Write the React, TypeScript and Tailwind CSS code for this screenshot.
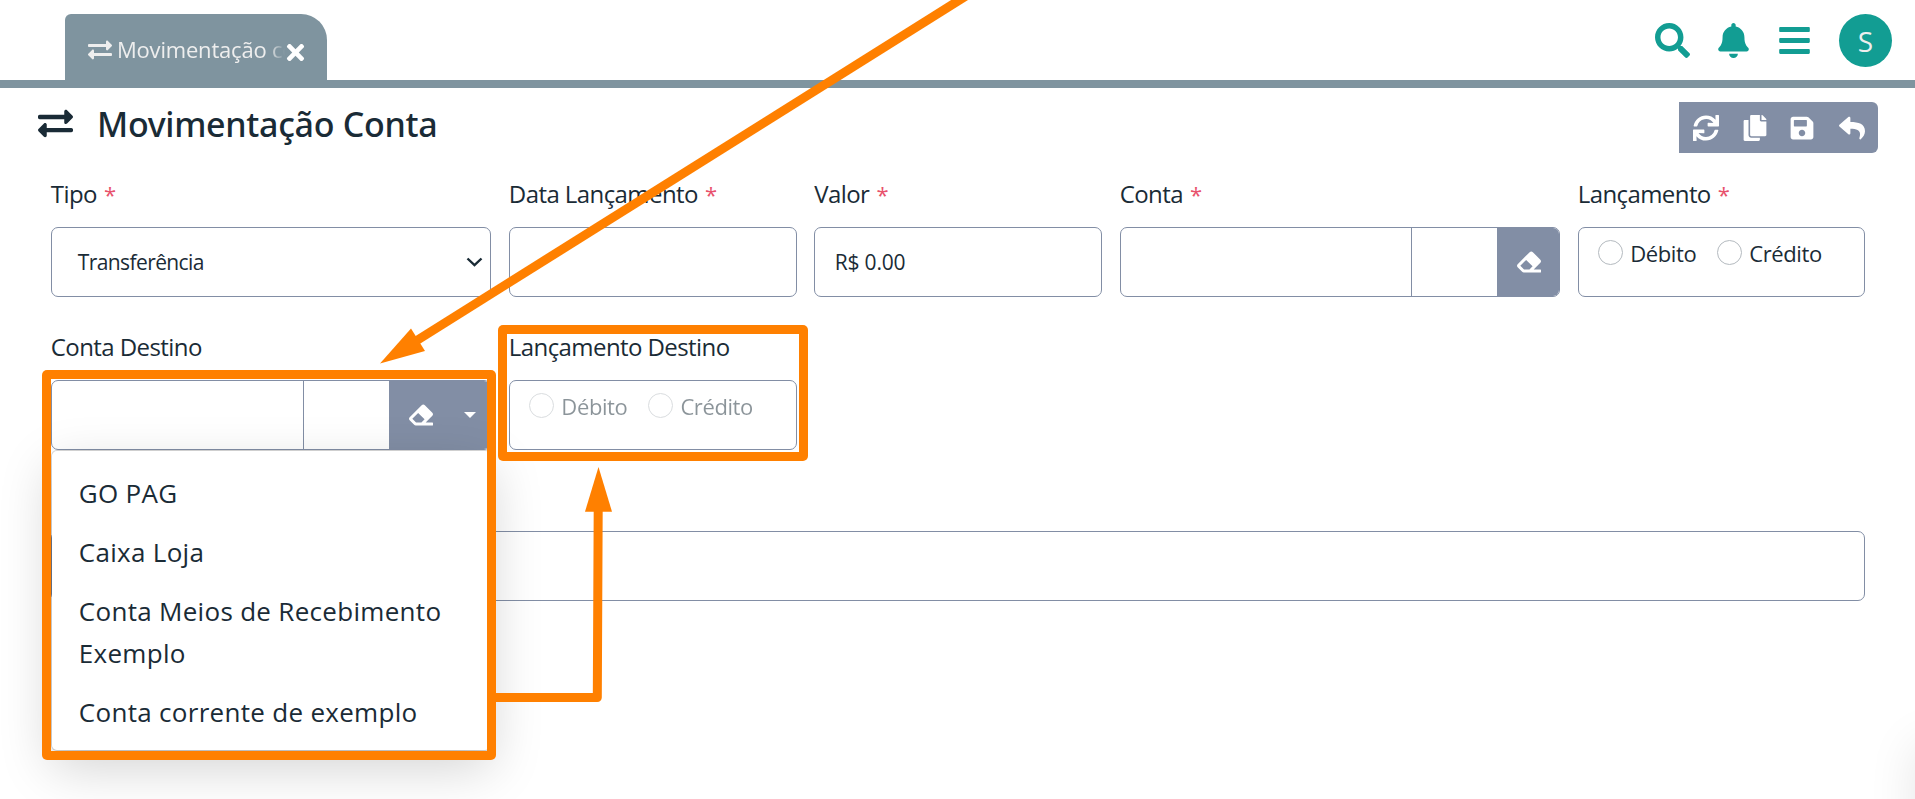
import type { ReactNode } from "react";
import {
  FaBars,
  FaBell,
  FaCopy,
  FaEraser,
  FaExchangeAlt,
  FaReply,
  FaSave,
  FaSearch,
  FaSync,
  FaTimes,
} from "react-icons/fa";

function Field({ label, required, className, children }: { label: string; required?: boolean; className: string; children: ReactNode }) {
  return (
    <div className={className}>
      <div className="mb-[15px] h-9 whitespace-nowrap text-[24px] leading-9 tracking-[-0.58px]">
        {label}
        {required && <span className="ml-[2px] text-[22px] text-[#e8516c]"> *</span>}
      </div>
      {children}
    </div>
  );
}

const box = "h-[70px] rounded-[7px] border border-[#828ea5]";

function Radios({ disabled }: { disabled?: boolean }) {
  return (
    <div className={`${box} flex items-start pt-3 pl-[19.5px]`}>
      <div className={`flex ${disabled ? "opacity-50" : ""}`}>
        {["Débito", "Crédito"].map((name) => (
          <label key={name} className="mr-[21px] flex h-[25px] items-center text-[22px] tracking-[-0.4px]">
            <span className="mr-[7px] size-[25px] rounded-full border border-[#b4babf] bg-white" />
            <span className="relative top-px leading-[25px]">{name}</span>
          </label>
        ))}
      </div>
    </div>
  );
}

function Lookup({ caret }: { caret?: boolean }) {
  return (
    <div className={`${box} flex overflow-hidden`}>
      <div className="flex-1 border-r border-[#828ea5]" />
      <div className="w-[85px]" />
      <div className={`flex items-center bg-[#828ea5] text-white ${caret ? "w-[101px] pl-5" : "w-[62px] pl-5"}`}>
        <FaEraser className="size-6" />
        {caret && (
          <svg className="ml-[31px] h-[6px] w-3" viewBox="0 0 12 6">
            <path d="M0 0H12L6 6Z" fill="currentColor" />
          </svg>
        )}
      </div>
    </div>
  );
}

export default function App() {
  return (
    <div className="relative h-[799px] w-[1915px] overflow-hidden bg-white font-['Open_Sans','Noto_Sans',sans-serif] text-[#1a2b36]">
      <header className="flex h-[88px] justify-between border-b-8 border-[#7f949f] pr-[23px] pl-[65px]">
        <div className="mt-[14px] flex h-[66px] w-[262px] rounded-tl-[6px] rounded-tr-[26px] bg-[#7f949f] pl-[23px] text-[#eeeeee]">
          <FaExchangeAlt className="mt-6 size-6" />
          <span className="ml-[5px] mt-[18px] w-[168px] overflow-hidden whitespace-nowrap text-[22px] leading-[34px] tracking-[-0.2px] [mask-image:linear-gradient(to_right,black_90%,transparent_100%)]">
            Movimentação conta
          </span>
          <FaTimes className="mt-[26px] -ml-[2px] size-[25px] text-white" />
        </div>
        <div className="flex pt-[14px] text-[#129d93]">
          <FaSearch className="mt-[9px] size-[35px]" />
          <FaBell className="mt-[9px] ml-[26px] size-[35px]" />
          <FaBars className="mt-[9px] ml-[26px] size-[35px]" />
          <div className="ml-[27px] flex size-[53px] items-center justify-center rounded-full bg-[#129d93] text-[28px] leading-none text-[#eeeeee]">
            S
          </div>
        </div>
      </header>

      <div className="flex h-[88px] items-start justify-between pt-[14px] pr-[37px] pl-[38px]">
        <div className="flex">
          <FaExchangeAlt className="mt-1 size-[35px]" />
          <h1 className="-mt-px ml-6 h-[46px] font-['Noto_Sans',sans-serif] text-[34px] leading-[46px] font-medium tracking-[-0.3px]">
            Movimentação Conta
          </h1>
        </div>
        <div className="flex h-[51px] w-[199px] items-center rounded-r-[6px] bg-[#828ea5] pl-[14px] text-white">
          <FaSync className="size-[26px]" />
          <FaCopy className="ml-[23px] size-[26px]" />
          <FaSave className="ml-[21px] size-[26px]" />
          <FaReply className="ml-[24px] size-[26px]" />
        </div>
      </div>

      <main className="mr-[49.6px] ml-[50.8px]">
        <div className="mb-8 grid grid-cols-12 gap-x-[17.7px]">
          <Field label="Tipo" required className="col-span-3">
            <div className={`${box} flex items-center justify-between pr-[7px] pl-[26px] text-[21px] tracking-[-0.6px]`}>
              <span className="mt-px">Transferência</span>
              <svg className="h-[10px] w-[17px]" viewBox="0 0 17 10" fill="none" stroke="currentColor" strokeWidth="2.4">
                <path d="M1.5 1.5 8.5 8.2 15.5 1.5" />
              </svg>
            </div>
          </Field>
          <Field label="Data Lançamento" required className="col-span-2">
            <div className={box} />
          </Field>
          <Field label="Valor" required className="col-span-2">
            <div className={`${box} flex items-center pl-[19.5px] text-[21px] tracking-[-0.2px]`}>
              <span className="mt-px">R$ 0.00</span>
            </div>
          </Field>
          <Field label="Conta" required className="col-span-3">
            <Lookup />
          </Field>
          <Field label="Lançamento" required className="col-span-2">
            <Radios />
          </Field>
        </div>

        <div className="mb-[81px] grid grid-cols-12 gap-x-[17.7px]">
          <Field label="Conta Destino" className="relative col-span-3">
            <Lookup caret />
            <ul className="absolute top-[121px] left-0 h-[301px] w-full rounded-[6px] border border-black/15 bg-white bg-clip-padding py-[12.5px] text-[26px] leading-[42px] tracking-[0.3px] shadow-[0_17px_52px_rgba(0,0,0,0.175)]">
              {["GO PAG", "Caixa Loja", "Conta Meios de Recebimento Exemplo", "Conta corrente de exemplo"].map((name) => (
                <li key={name} className="px-[27px] py-[8.5px]">
                  {name}
                </li>
              ))}
            </ul>
          </Field>
          <Field label="Lançamento Destino" className="col-span-2">
            <Radios disabled />
          </Field>
        </div>

        <div className={box} />
      </main>

      {/* Shadow of the panel parked past the right edge */}
      <div className="absolute top-[745px] left-full h-[200px] w-[100px] shadow-[0_0_48px_rgba(0,0,0,0.1)]" />

      {/* Callout frames and arrows */}
      <div className="absolute top-[370px] left-[42px] h-[390px] w-[454px] rounded-[5px] bg-[#ff8000] [clip-path:polygon(evenodd,0_0,100%_0,100%_100%,0_100%,0_0,9px_9px,445px_9px,445px_381px,9px_381px,9px_9px)]" />
      <div className="absolute top-[325px] left-[498px] h-[136px] w-[310px] rounded-[5px] bg-[#ff8000] [clip-path:polygon(evenodd,0_0,100%_0,100%_100%,0_100%,0_0,9px_9px,301px_9px,301px_127px,9px_127px,9px_9px)]" />
      <svg className="pointer-events-none absolute top-0 left-0 h-[799px] w-[1915px]" viewBox="0 0 1915 799" fill="none">
        <path d="M976 -10.3 416 341" stroke="#ff8000" strokeWidth="9" />
        <path d="M380 363.5 411 328.5 425 351Z" fill="#ff8000" />
        <path d="M490 697.5H597.3L598.2 508" stroke="#ff8000" strokeWidth="9" strokeLinejoin="round" />
        <path d="M598.5 467 612 511.7H585Z" fill="#ff8000" />
      </svg>
    </div>
  );
}
